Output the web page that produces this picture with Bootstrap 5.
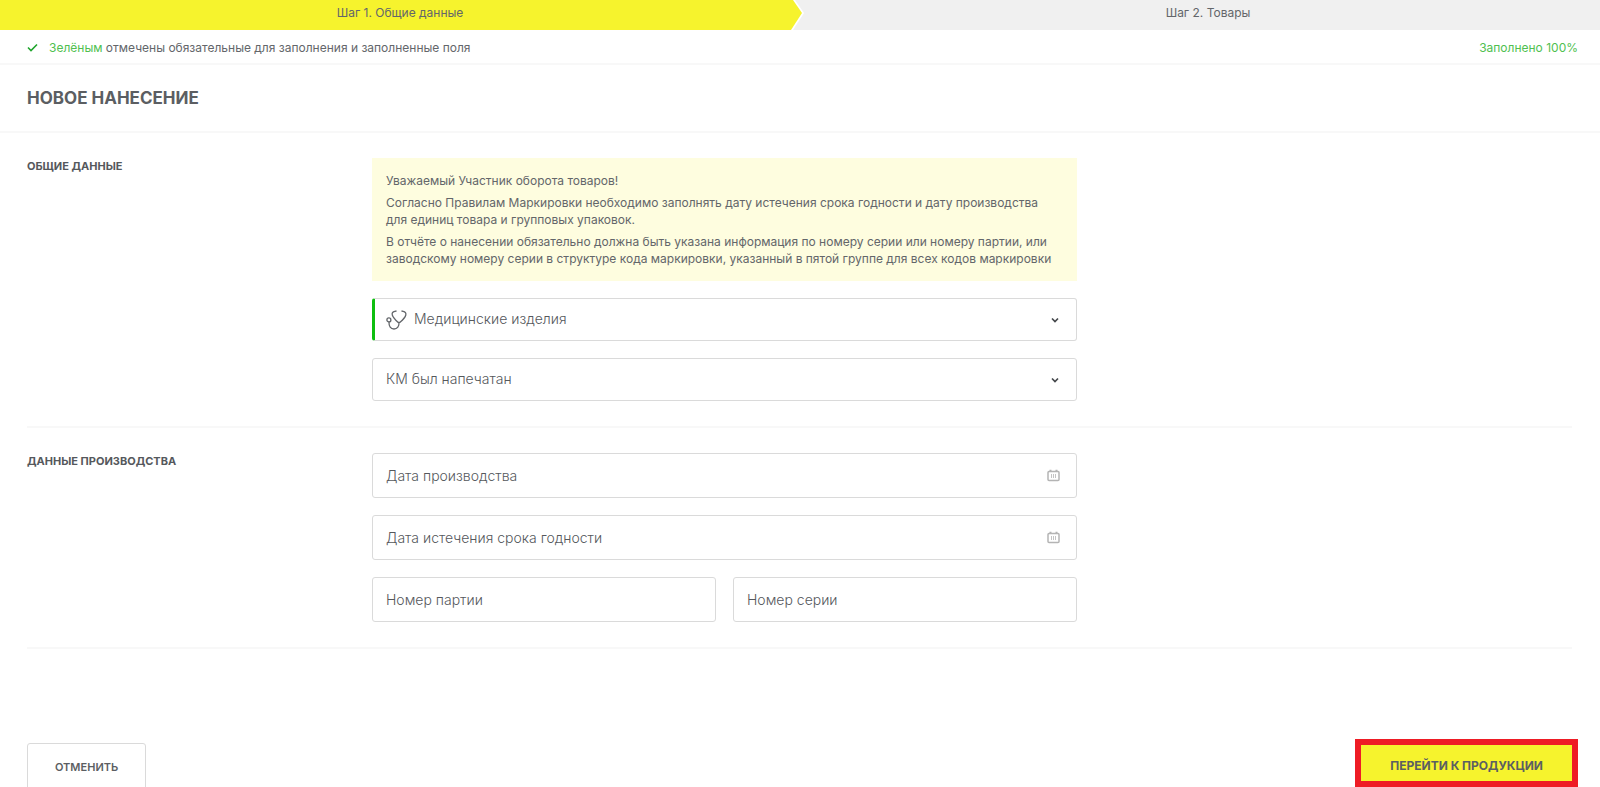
<!DOCTYPE html>
<html lang="ru">
<head>
<meta charset="utf-8">
<meta name="viewport" content="width=device-width, initial-scale=1">
<title>Новое нанесение</title>
<link rel="stylesheet" href="https://cdn.jsdelivr.net/npm/bootstrap@5.3.0/dist/css/bootstrap.min.css">
<style>
  :root { --ink: #63666a; --line: #dadada; --hair: #f8f8f8; --accent: #f6f32d; --ok: #50bf50; }
  body { font-family: Inter, "Open Sans", sans-serif; font-size: 12px; line-height: 18px; color: var(--ink); background: #fff; overflow-x: hidden; }
  .steps { height: 30px; background: #f0f0f0; line-height: 26px; }
  .step-done { position: relative; flex: 0 0 50%; }
  .step-done svg { position: absolute; inset: 0 auto 0 0; width: calc(100% + 4px); height: 30px; }
  .step-name { position: relative; }
  .step-next { padding-left: 16px; }
  .hair-b { border-bottom: 2px solid var(--hair); }
  .status { height: 35px; padding: 2px 22px 0 27px; }
  .ok { color: var(--ok); }
  .status svg { margin-right: 11px; }
  .page-head { height: 68px; padding: 0 27px; }
  .page-head h1 { font-size: 17px; line-height: 24px; font-weight: 700; color: #5b5e62; }
  .block { margin: 0 28px 0 27px; padding: 25px 0; }
  .block h2 { flex: 0 0 345px; font-size: 11px; line-height: 16px; font-weight: 700; color: #55585c; }
  .fields { flex: 0 1 705px; gap: 17px; }
  .notice { background: #fefddf; padding: 14px 20px 14px 14px; }
  .notice p { margin-bottom: 5px; line-height: 17px; }
  .notice p:last-child { margin-bottom: 0; }
  .field { position: relative; }
  .field .form-control, .field .form-select { height: 45px; padding: 0 40px 0 13px; font-size: 14px; font-weight: 300; line-height: 20px; color: #55585c; border: 1px solid var(--line); border-radius: 3px; background-color: #fff; }
  .field .form-select { height: 43px; background-position: right 16px center; background-size: 10px 10px; padding-bottom: 2px;
    background-image: url("data:image/svg+xml,%3Csvg xmlns='http://www.w3.org/2000/svg' viewBox='0 0 10 10'%3E%3Cpath d='M2 3.5l3 3 3-3' fill='none' stroke='%2345484c' stroke-width='1.7'/%3E%3C/svg%3E"); }
  .field .form-select.filled { border-left: 3px solid #0fbf10; padding-left: 39px; }
  .field .form-control::placeholder { color: #55585c; opacity: 1; }
  .field > svg { position: absolute; top: 50%; transform: translateY(-50%); pointer-events: none; }
  .i-kind { left: 14px; }
  .i-cal { right: 17px; }
  .fields-pair { display: grid; grid-template-columns: 1fr 1fr; gap: 17px; }
  .actions { padding: 90px 22px 0 27px; }
  .actions .btn { line-height: 16px; color: #5b5e62; border-radius: 3px; }
  .actions .btn-cancel { font-size: 11px; font-weight: 600; border: 1px solid var(--line); padding: 15px 27px; margin-top: 4px; }
  .actions .btn-go { font-size: 12px; font-weight: 700; background: var(--accent); border: 6px solid #ee1c25; border-radius: 0; padding: 13px 29px 7px; }
  @media (max-width: 900px) { .block { flex-direction: column; gap: 16px; } .block h2, .fields { flex-basis: auto; } }
</style>
</head>
<body>
<nav class="steps d-flex text-center" aria-label="Шаги">
  <div class="step-done">
    <svg viewBox="0 0 805 30" preserveAspectRatio="xMaxYMid slice" aria-hidden="true"><path d="M0 0h796l9 13-11 17H0z" fill="#fff"/><path d="M0 0h794l9 13-11 17H0z" fill="#f6f32d"/></svg>
    <span class="step-name">Шаг 1. Общие данные</span>
  </div>
  <div class="step-next flex-fill">Шаг 2. Товары</div>
</nav>
<div class="status hair-b d-flex align-items-center justify-content-between">
  <div class="d-flex align-items-center">
    <svg width="11" height="9" viewBox="0 0 11 9" aria-hidden="true"><path d="M1 4.500l3 3L10 1.500" fill="none" stroke="#1fa52c" stroke-width="1.600"/></svg>
    <span><span class="ok">Зелёным</span> отмечены обязательные для заполнения и заполненные поля</span>
  </div>
  <span class="ok">Заполнено 100%</span>
</div>
<header class="page-head hair-b d-flex align-items-center"><h1 class="m-0">НОВОЕ НАНЕСЕНИЕ</h1></header>
<main>
<form>
  <section class="block hair-b d-flex">
    <h2 class="m-0">ОБЩИЕ ДАННЫЕ</h2>
    <div class="fields d-flex flex-column">
      <div class="notice">
        <p>Уважаемый Участник оборота товаров!</p>
        <p>Согласно Правилам Маркировки необходимо заполнять дату истечения срока годности и дату производства для единиц товара и групповых упаковок.</p>
        <p>В отчёте о нанесении обязательно должна быть указана информация по номеру серии или номеру партии, или заводскому номеру серии в структуре кода маркировки, указанный в пятой группе для всех кодов маркировки</p>
      </div>
      <div class="field">
        <select class="form-select filled" aria-label="Товарная группа"><option>Медицинские изделия</option></select>
        <svg class="i-kind" width="21" height="21" viewBox="0 0 21 21" fill="none" stroke="#63666a" stroke-width="1.300" aria-hidden="true"><path d="M10.500 1.500l-1.700.3C6.500 2.200 5.800 3.700 6.300 5.500c.7 2.600 3.200 5 5.700 7.300h2c2.700-2.300 5.200-4.700 5.800-7.300.4-1.800-.5-3.300-2.600-3.700l-1.700-.3"/><path d="M13 12.800c.3 4-1.700 6.700-5 6.700s-5.200-2.700-5-7"/><circle cx="2.900" cy="10.400" r="2"/></svg>
      </div>
      <div class="field">
        <select class="form-select" aria-label="Способ нанесения"><option>КМ был напечатан</option></select>
      </div>
    </div>
  </section>
  <section class="block hair-b d-flex">
    <h2 class="m-0">ДАННЫЕ ПРОИЗВОДСТВА</h2>
    <div class="fields d-flex flex-column">
      <div class="field">
        <input class="form-control" type="text" placeholder="Дата производства" aria-label="Дата производства">
        <svg class="i-cal" width="13" height="13" viewBox="0 0 13 13" aria-hidden="true"><rect x="1" y="2" width="11" height="9" rx="1" fill="none" stroke="#b4b4b4" stroke-width="1.500"/><path d="M3.500 0v2M9.500 0v2" stroke="#b4b4b4" stroke-width="2"/><path d="M4.500 4.500v4M6.500 4.500v4M8.500 4.500v4" stroke="#c4c4c4"/></svg>
      </div>
      <div class="field">
        <input class="form-control" type="text" placeholder="Дата истечения срока годности" aria-label="Дата истечения срока годности">
        <svg class="i-cal" width="13" height="13" viewBox="0 0 13 13" aria-hidden="true"><rect x="1" y="2" width="11" height="9" rx="1" fill="none" stroke="#b4b4b4" stroke-width="1.500"/><path d="M3.500 0v2M9.500 0v2" stroke="#b4b4b4" stroke-width="2"/><path d="M4.500 4.500v4M6.500 4.500v4M8.500 4.500v4" stroke="#c4c4c4"/></svg>
      </div>
      <div class="fields-pair">
        <div class="field"><input class="form-control" type="text" placeholder="Номер партии" aria-label="Номер партии"></div>
        <div class="field"><input class="form-control" type="text" placeholder="Номер серии" aria-label="Номер серии"></div>
      </div>
    </div>
  </section>
  <div class="actions d-flex justify-content-between align-items-start">
    <button class="btn btn-cancel" type="button">ОТМЕНИТЬ</button>
    <button class="btn btn-go" type="submit">ПЕРЕЙТИ К ПРОДУКЦИИ</button>
  </div>
</form>
</main>
<script src="https://cdn.jsdelivr.net/npm/bootstrap@5.3.0/dist/js/bootstrap.bundle.min.js"></script>
</body>
</html>
